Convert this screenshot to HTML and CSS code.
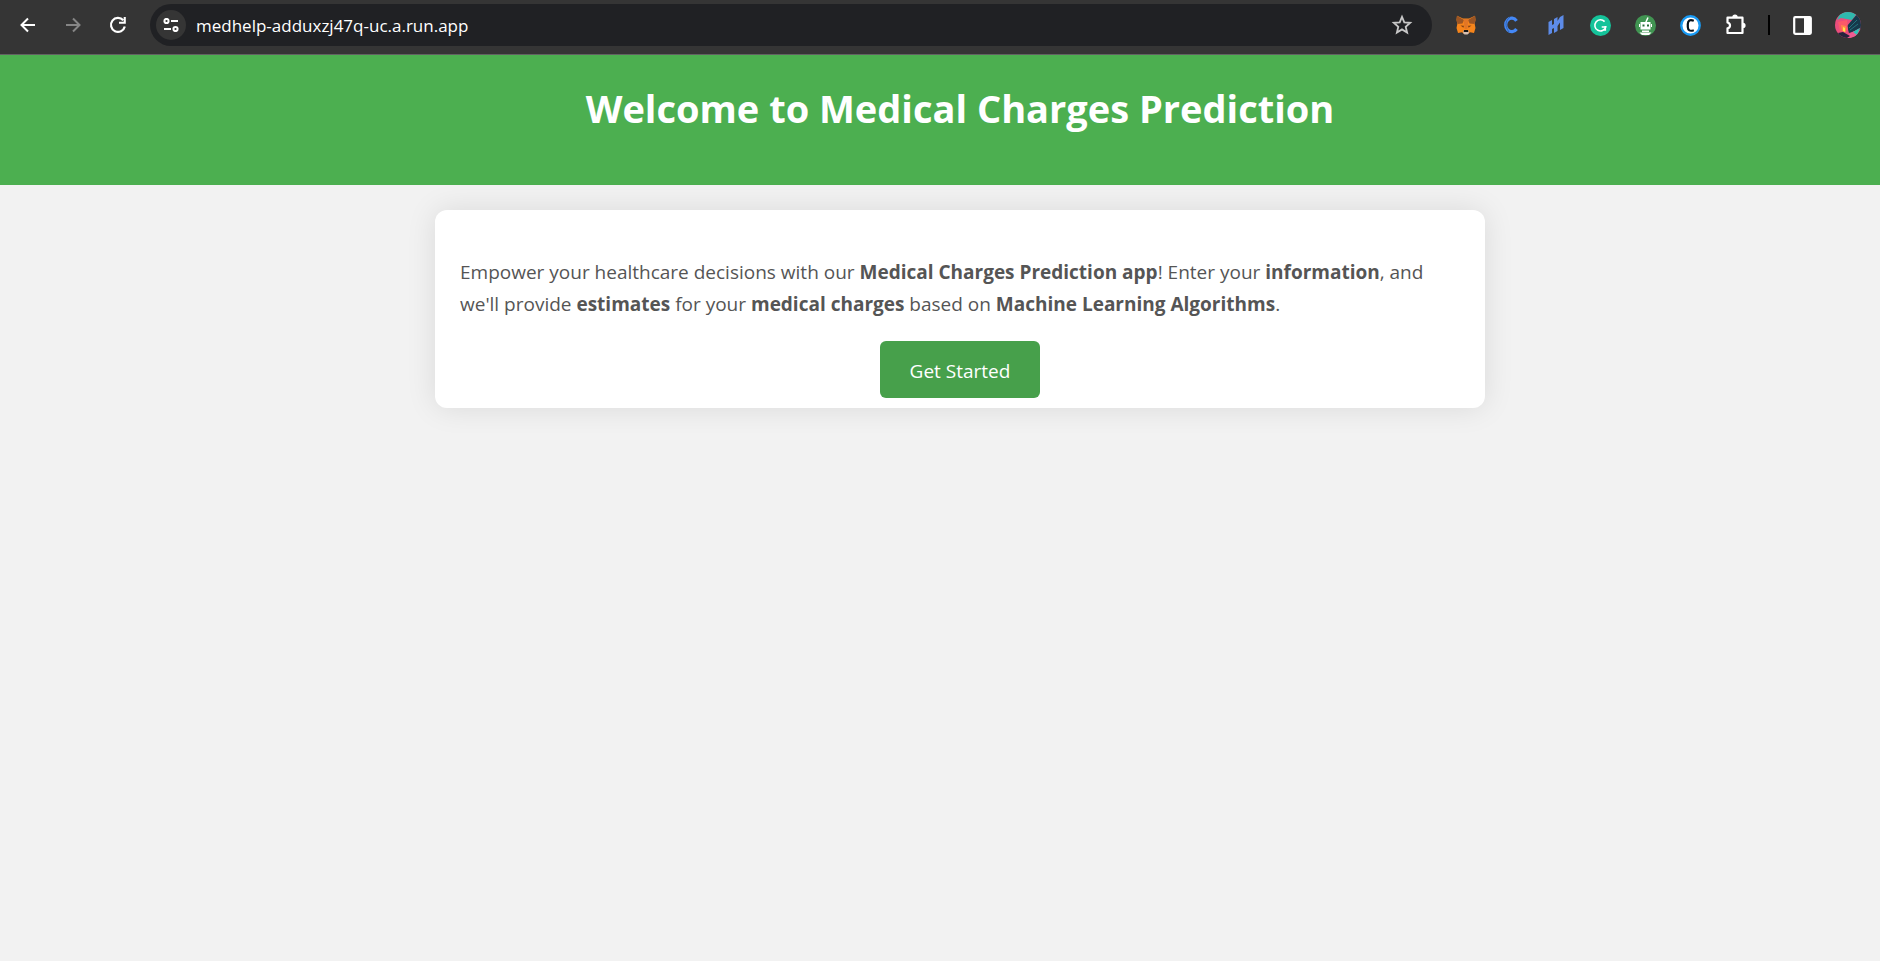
FILE: index.html
```html
<!DOCTYPE html>
<html lang="en">
<head>
<meta charset="utf-8">
<title>Medical Charges Prediction</title>
<link rel="stylesheet" href="styles.css">
</head>
<body>
<nav class="toolbar" aria-label="Browser">
  <button class="tool" aria-label="Back"><svg width="16" height="16" viewBox="0 0 16 16" fill="none" stroke="#fff" stroke-width="2"><path d="M15 8H2M8 1.5 1.5 8 8 14.5"/></svg></button>
  <button class="tool" aria-label="Forward"><svg width="16" height="16" viewBox="0 0 16 16" fill="none" stroke="#858585" stroke-width="2"><path d="M1 8h13M8 1.5 14.500 8 8 14.500"/></svg></button>
  <button class="tool" aria-label="Reload"><svg width="18" height="18" viewBox="0 0 18 18"><path d="M14.300 4.300A7 7 0 1 0 15.800 10.500" fill="none" stroke="#fff" stroke-width="2.200"/><path d="M16.800 1v6.800H10V5.700h4.700V1z" fill="#fff"/></svg></button>
  <form class="address">
    <button class="chip" type="button" aria-label="Site information"><svg width="16" height="14" viewBox="0 0 16 14" fill="none" stroke="#fff" stroke-width="2"><circle cx="3.500" cy="3" r="2.100"/><path d="M8 3h7M1 11h7"/><circle cx="12.500" cy="11" r="2.100"/></svg></button>
    <input class="url" type="text" aria-label="Address" value="medhelp-adduxzj47q-uc.a.run.app">
    <button class="tool star" type="button" aria-label="Bookmark"><svg width="22" height="22" viewBox="0 0 22 22" fill="none" stroke="#c7c7c7" stroke-width="1.800"><path d="m11 2.800 2.300 5.500 5.900.5-4.500 3.900 1.400 5.800-5.100-3.100-5.100 3.100 1.400-5.800-4.500-3.900 5.900-.5z"/></svg></button>
  </form>
  <button class="tool" aria-label="Fox wallet"><svg width="20" height="20" viewBox="0 0 20 20"><path d="M1 .8 7 3.500h6l6-2.700.5 4-.8 4.200.8 4-1.500 5-4-.8-2.300 1.800H8.300L6 17.200 2 18 .5 13l.8-4-.8-4.200z" fill="#f6851b"/><path d="M1 .8 8 5 6.500 8.500l-5 .5-1-4zM19 .8 12 5l1.500 3.500 5 .5 1-4z" fill="#9b5524"/><path d="m7.500 4 1.200 10h2.600l1.200-10z" fill="#e27625"/><path d="m4.500 10.500 3.500.2-.6 2zM15.500 10.500l-3.500.2.600 2z" fill="#804016"/><path d="m7 16 1.500-1h3l1.500 1-.5 2.500-1 1h-3l-1-1z" fill="#d5bfb2"/><path d="M8 15h4l.4 2H7.600z" fill="#161616"/></svg></button>
  <button class="tool" aria-label="C extension"><svg width="18" height="18" viewBox="0 0 18 18" fill="none" stroke="#4488f7"><path d="M14.500 4.800A6 6.800 0 1 0 14.500 13" stroke-width="3.200"/><path d="M8 1C3 5 2.800 10 7 16" stroke="#315d9d" stroke-width=".8"/></svg></button>
  <button class="tool" aria-label="H extension"><svg width="16" height="20" viewBox="0 0 16 20"><path d="M.5 7 4 5v5l2-1V4l3.500-2v4l2.500-4L15.500 0v13L12 15V7.500L9.500 11v5L6 18v-5l-2 1v4L.5 20z" fill="#5d8be8"/></svg></button>
  <button class="tool" aria-label="Grammar checker"><svg width="21" height="21" viewBox="0 0 21 21"><circle cx="10.500" cy="10.500" r="10.500" fill="#15c39a"/><path d="M14.600 6.600A5.600 5.600 0 1 0 15.800 12H11.700M15.300 11v4.800" fill="none" stroke="#fff" stroke-width="1.600"/></svg></button>
  <button class="tool" aria-label="Robot assistant"><svg width="21" height="21" viewBox="0 0 21 21"><circle cx="10.500" cy="10.500" r="10.500" fill="#419452"/><path d="M10.500 8 13 2.500" stroke="#fff" stroke-width="1.500"/><path d="M5.500 7h10v7.500h-10zM4 9h1v3H4zM16 9h1v3h-1zM7 15.500h7V17H7zM4.500 17.500h12l-2.500 2.400H7z" fill="#fff"/><path d="M7.500 9.500h2v2h-2zM12 9.500h2v2h-2z" fill="#276c38"/></svg></button>
  <button class="tool" aria-label="C badge extension"><svg width="21" height="21" viewBox="0 0 21 21"><circle cx="10.500" cy="10.500" r="9.200" fill="#fff" stroke="#199bf5" stroke-width="2.400"/><path d="M13.800 5.800Q8 3.700 7.800 9v3Q8 17.200 13.800 15.200" fill="none" stroke="#07111c" stroke-width="2.200"/></svg></button>
  <button class="tool" aria-label="Extensions"><svg width="22" height="22" viewBox="0 0 22 22"><path d="M2.500 3.700h15v15.300h-15v-4.700q2.500-.6 2.500-2.900t-2.500-2.900z" fill="none" stroke="#fff" stroke-width="2.200" stroke-linejoin="round"/><path d="M7.300 3.300a2.700 2.700 0 0 1 5.400 0zM18 8.800a2.600 2.600 0 0 1 0 5.200z" fill="#fff"/></svg></button>
  <span class="divider"></span>
  <button class="tool" aria-label="Side panel"><svg width="19" height="19" viewBox="0 0 19 19"><rect x="1.200" y="1.200" width="16.600" height="16.600" rx="1" fill="none" stroke="#fff" stroke-width="2.200"/><path d="M11 1h7v17h-7z" fill="#fff"/></svg></button>
  <button class="tool" aria-label="Profile"><svg class="avatar" width="26" height="26" viewBox="0 0 26 26"><path d="M0 0h26v26H0z" fill="#e94d7c"/><path d="M2 8 6 0h17l-6 8-11-2z" fill="#2fb9ae"/><path d="M23 1 26 5v12l-12 4-2-7z" fill="#16384b"/><path d="M3 10 12 8l1 10-8 2z" fill="#fb5969"/><path d="m6 13 5 1v6l-4-1z" fill="#ff8748"/><path d="m8 15 2 1v4l-2-1z" fill="#ffe04d"/><path d="m14 22 11-6-5 10h-8z" fill="#f05b91"/><path d="m18 20 7-4-3 7z" fill="#2bc7b8"/><path d="m3 21 5-1 7 4-3 2H5z" fill="#25243d"/><path d="m14 16 8-8M15 18l8-6" stroke="#25717d"/></svg></button>
</nav>
<header class="banner"><h1 class="title">Welcome to Medical Charges Prediction</h1></header>
<main class="content">
  <section class="card">
    <p class="intro">Empower your healthcare decisions with our <strong>Medical Charges Prediction app</strong>! Enter your <strong>information</strong>, and we'll provide <strong>estimates</strong> for your <strong>medical charges</strong> based on <strong>Machine Learning Algorithms</strong>.</p>
    <a class="start" href="#">Get Started</a>
  </section>
</main>
</body>
</html>
```
FILE: styles.css
```css
* { box-sizing: border-box; }
body {
  margin: 0;
  background: #f2f2f2;
  color: #555;
  font-family: "Open Sans", "Noto Sans", sans-serif;
}
svg { display: block; flex: none; }
button { padding: 0; border: 0; background: none; }
.toolbar {
  display: flex;
  align-items: center;
  height: 55px;
  padding: 0 10px 4px 5px;
  border-bottom: 1px solid #626262;
  background: #353535;
}
.tool {
  display: flex;
  flex: none;
  align-items: center;
  justify-content: center;
  width: 45px;
  height: 42px;
}
.address {
  display: flex;
  flex: 1;
  align-items: center;
  height: 42px;
  margin: 0 11px 0 10px;
  padding: 0 8px 0 6px;
  border-radius: 21px;
  background: #202124;
}
.chip {
  display: flex;
  align-items: center;
  justify-content: center;
  width: 30px;
  height: 30px;
  border-radius: 50%;
  background: #353535;
}
.url {
  flex: 1;
  min-width: 0;
  margin-left: 10px;
  padding: 0;
  border: 0;
  outline: 0;
  background: transparent;
  color: #fff;
  font: 17px "Open Sans", "Noto Sans", sans-serif;
}
.divider {
  width: 2px;
  height: 20px;
  margin: 0 10px;
  background: #000;
}
.avatar { border-radius: 50%; }
.banner {
  padding: 23px 0 47px 40px;
  background: #4caf50;
  color: #fff;
  text-align: center;
}
.title {
  margin: 0;
  font-size: 38px;
  line-height: 60px;
}
.content { padding: 25px 0 25px 40px; }
.card {
  max-width: 1050px;
  margin: 0 auto;
  padding: 46px 25px 10px;
  border-radius: 12px;
  background: #fff;
  box-shadow: 0 0 30px rgba(0, 0, 0, .1);
}
.intro {
  margin: 0 0 21px;
  font-size: 19px;
  line-height: 32px;
}
.start {
  display: block;
  width: fit-content;
  margin: 0 auto;
  padding: 14px 30px 11px;
  border-radius: 6px;
  background: #47a04b;
  color: #fff;
  font-size: 19px;
  line-height: 32px;
  text-decoration: none;
}
```
